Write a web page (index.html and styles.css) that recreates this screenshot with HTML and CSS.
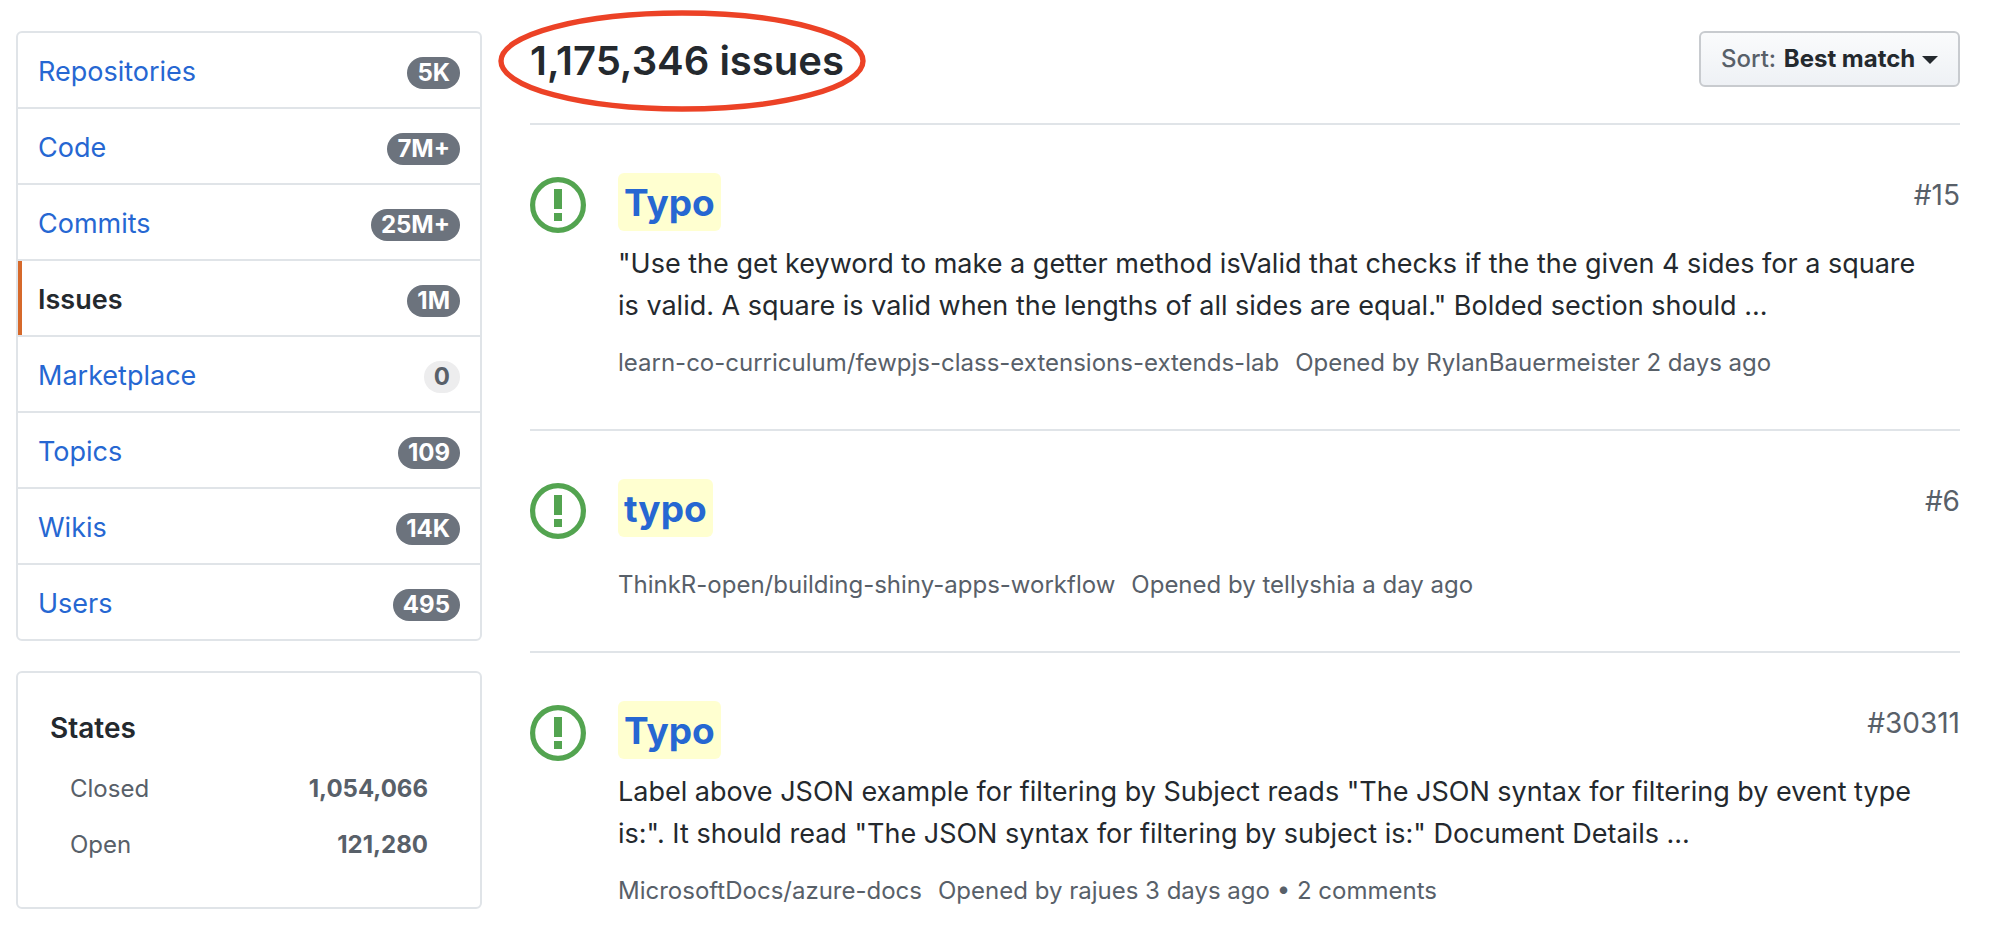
FILE: index.html
```html
<!DOCTYPE html>
<html lang="en">
<head>
<meta charset="utf-8">
<title>Issue search results</title>
<link rel="stylesheet" href="styles.css">
</head>
<body>
<div class="page">
  <aside class="sidebar">
    <nav class="menu" aria-label="Result types">
      <a class="menu-item" href="#repositories">Repositories <span class="counter">5K</span></a>
      <a class="menu-item" href="#code">Code <span class="counter">7M+</span></a>
      <a class="menu-item" href="#commits">Commits <span class="counter">25M+</span></a>
      <a class="menu-item selected" href="#issues" aria-current="page">Issues <span class="counter">1M</span></a>
      <a class="menu-item" href="#marketplace">Marketplace <span class="counter counter-light">0</span></a>
      <a class="menu-item" href="#topics">Topics <span class="counter">109</span></a>
      <a class="menu-item" href="#wikis">Wikis <span class="counter">14K</span></a>
      <a class="menu-item" href="#users">Users <span class="counter">495</span></a>
    </nav>
    <section class="states">
      <h2 class="states-title">States</h2>
      <a class="state" href="#closed">Closed <span class="state-count">1,054,066</span></a>
      <a class="state" href="#open">Open <span class="state-count">121,280</span></a>
    </section>
  </aside>

  <main class="results">
    <header class="results-header">
      <h1 class="results-title">1,175,346 issues
        <svg class="ring" viewBox="0 0 368 104" aria-hidden="true"><ellipse cx="184" cy="52" rx="181" ry="48" fill="none" stroke="#ec4226" stroke-width="5.4"/></svg>
      </h1>
      <button class="sort" type="button"><span class="sort-label">Sort:</span> Best match <span class="caret"></span></button>
    </header>

    <article class="issue">
      <svg class="issue-icon" viewBox="0 0 56 56" aria-label="Open issue"><circle cx="28" cy="28" r="25.4" fill="none" stroke="currentColor" stroke-width="5.2"/><path fill="currentColor" d="M24 12h8v20h-8zM24 36h8v8h-8z"/></svg>
      <div class="issue-body">
        <div class="issue-head">
          <h2 class="issue-title"><a href="#15"><em class="hit">Typo</em></a></h2>
          <span class="issue-number">#15</span>
        </div>
        <p class="issue-text">"Use the get keyword to make a getter method isValid that checks if the the given 4 sides for a square is valid. A square is valid when the lengths of all sides are equal." Bolded section should ...</p>
        <div class="issue-meta"><a href="#repo-15">learn-co-curriculum/fewpjs-class-extensions-extends-lab</a><span>Opened by <a href="#RylanBauermeister">RylanBauermeister</a> 2 days ago</span></div>
      </div>
    </article>

    <article class="issue">
      <svg class="issue-icon" viewBox="0 0 56 56" aria-label="Open issue"><circle cx="28" cy="28" r="25.4" fill="none" stroke="currentColor" stroke-width="5.2"/><path fill="currentColor" d="M24 12h8v20h-8zM24 36h8v8h-8z"/></svg>
      <div class="issue-body">
        <div class="issue-head">
          <h2 class="issue-title"><a href="#6"><em class="hit">typo</em></a></h2>
          <span class="issue-number">#6</span>
        </div>
        <div class="issue-meta"><a href="#repo-6">ThinkR-open/building-shiny-apps-workflow</a><span>Opened by <a href="#tellyshia">tellyshia</a> a day ago</span></div>
      </div>
    </article>

    <article class="issue">
      <svg class="issue-icon" viewBox="0 0 56 56" aria-label="Open issue"><circle cx="28" cy="28" r="25.4" fill="none" stroke="currentColor" stroke-width="5.2"/><path fill="currentColor" d="M24 12h8v20h-8zM24 36h8v8h-8z"/></svg>
      <div class="issue-body">
        <div class="issue-head">
          <h2 class="issue-title"><a href="#30311"><em class="hit">Typo</em></a></h2>
          <span class="issue-number">#30311</span>
        </div>
        <p class="issue-text">Label above JSON example for filtering by Subject reads "The JSON syntax for filtering by event type is:". It should read "The JSON syntax for filtering by subject is:" Document Details ...</p>
        <div class="issue-meta"><a href="#repo-30311">MicrosoftDocs/azure-docs</a><span>Opened by <a href="#rajues">rajues</a> 3 days ago • 2 comments</span></div>
      </div>
    </article>
  </main>
</div>
</body>
</html>
```

FILE: styles.css
```css
* {
  box-sizing: border-box;
}

body {
  margin: 0;
  background: #fff;
  color: #24292e;
  font-family: Inter, "Liberation Sans", sans-serif;
  font-size: 27px;
  line-height: 42px;
}

a {
  color: inherit;
  text-decoration: none;
}

h1,
h2,
p {
  margin: 0;
}

.page {
  display: flex;
  align-items: flex-start;
  gap: 48px;
  padding: 31px 49px 0 16px;
}

.sidebar {
  flex: 0 0 466px;
}

.menu,
.states {
  border: 2px solid #e0e4e8;
  border-radius: 6px;
}

.menu {
  margin-bottom: 30px;
}

.menu-item {
  display: flex;
  justify-content: space-between;
  align-items: baseline;
  padding: 18px 20px 14px;
  color: #2667d2;
}

.menu-item + .menu-item {
  border-top: 2px solid #e0e4e8;
}

.menu-item.selected {
  color: #24292e;
  font-weight: 600;
  background: linear-gradient(#d6692b, #d6692b) left / 4px 100% no-repeat;
}

.counter {
  padding: 0 10px;
  border-radius: 16px;
  background: #6c737d;
  color: #fff;
  font-size: 24px;
  font-weight: 700;
  line-height: 32px;
}

.counter-light {
  background: #ededee;
  color: #586069;
}

.states {
  padding: 34px 32px;
}

.states-title {
  margin-bottom: 12px;
  font-size: 28px;
  font-weight: 600;
}

.state {
  display: flex;
  justify-content: space-between;
  padding: 10px 20px;
  color: #586069;
  font-size: 24px;
  line-height: 36px;
}

.state-count {
  font-weight: 700;
}

.results {
  flex: 1;
  min-width: 0;
}

.results-header {
  display: flex;
  justify-content: space-between;
  align-items: flex-start;
  padding-bottom: 32px;
  border-bottom: 2px solid #e0e4e8;
}

.results-title {
  position: relative;
  font-size: 40px;
  font-weight: 600;
  line-height: 60px;
}

.ring {
  position: absolute;
  left: -32px;
  top: -22px;
  width: 368px;
  height: 104px;
}

.sort {
  padding: 8px 20px;
  border: 2px solid #c8cbcf;
  border-radius: 6px;
  background: linear-gradient(#fafbfc, #eef1f5);
  color: #24292e;
  font-family: inherit;
  font-size: 24px;
  font-weight: 700;
  line-height: 36px;
}

.sort-label {
  margin-right: 2px;
  color: #586069;
  font-weight: 500;
}

.caret {
  display: inline-block;
  margin-left: 1px;
  border: 8px solid transparent;
  border-top-color: #24292e;
  border-bottom: 0;
  vertical-align: middle;
}

.issue {
  display: flex;
  gap: 32px;
  padding: 48px 0;
  border-bottom: 2px solid #e0e4e8;
}

.issue:last-child {
  border-bottom: 0;
}

.issue-icon {
  flex: none;
  width: 56px;
  height: 56px;
  margin-top: 4px;
  color: #53a450;
}

.issue-body {
  display: flex;
  flex: 1;
  flex-direction: column;
  min-width: 0;
}

.issue-head {
  display: flex;
  justify-content: space-between;
  align-items: flex-start;
  margin-bottom: 12px;
}

.issue-title {
  color: #2667d2;
  font-size: 37px;
  font-weight: 700;
  line-height: 56px;
}

.hit {
  display: block;
  padding: 2px 6px 0;
  border-radius: 6px;
  background: #ffffd0;
  font-style: normal;
}

.issue-number {
  padding-top: 1px;
  color: #586069;
  font-size: 28px;
}

.issue-text {
  padding-right: 24px;
}

.issue-meta {
  display: flex;
  gap: 16px;
  margin-top: 18px;
  color: #586069;
  font-size: 24px;
  line-height: 36px;
}
```
